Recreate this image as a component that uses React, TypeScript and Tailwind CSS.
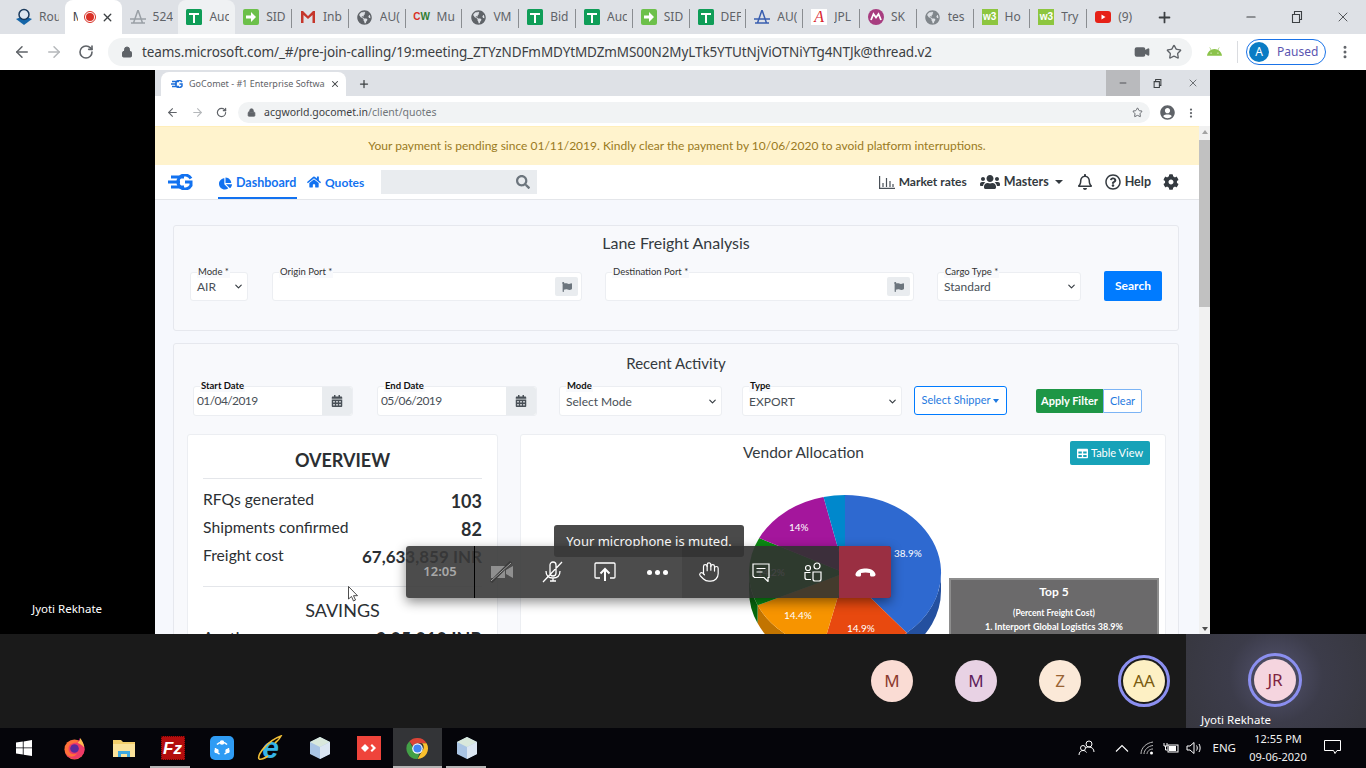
import { ArrowLeft, ArrowRight, ChevronDown, Hand, Lock, Minus, MoreVertical, Plus, RotateCw, Star, Video, X } from 'lucide-react';
import { FaAndroid, FaCalendarAlt, FaChartPie, FaCog, FaFlag, FaGlobeAmericas, FaHome, FaRegBell, FaRegQuestionCircle, FaSearch, FaTable, FaUserCircle, FaUsers } from 'react-icons/fa';

const sans = 'font-["Noto_Sans",sans-serif]';

// Browser tab favicons
function GreenCross() {
  return (
    <svg width="16" height="16" viewBox="0 0 16 16">
      <rect width="16" height="16" rx="1.5" fill="#0f9d58" />
      <path d="M3 5h10M8 5v9" stroke="#fff" strokeWidth="2" />
    </svg>
  );
}

function GreenArrow() {
  return (
    <svg width="16" height="16" viewBox="0 0 16 16">
      <rect width="16" height="16" rx="2" fill="#6cc04a" />
      <path d="M3 6.500h5V3l5 5-5 5V9.500H3z" fill="#fff" />
    </svg>
  );
}

function Gmail() {
  return (
    <svg width="16" height="14" viewBox="0 0 16 14">
      <path d="M1 13V1h2l5 5 5-5h2v12h-2.500V5L8 9 3.500 5v8z" fill="#c5362b" />
    </svg>
  );
}

function Globe() {
  return <FaGlobeAmericas className="text-[#5f6368]" size={15} />;
}

function Pylon({ color }: { color: string }) {
  return (
    <svg width="16" height="15" viewBox="0 0 16 15">
      <path d="M8 0L3.500 13M8 0l4.500 13M0 9h16M1 13h14" stroke={color} strokeWidth="1.500" fill="none" />
    </svg>
  );
}

function W3() {
  return <span className="flex h-[16px] w-[16px] items-center justify-center bg-[#8dc63f] font-['Liberation_Sans'] text-[10px] font-bold leading-none text-white">w3</span>;
}

const tabs: { icon: React.ReactNode; label: string; active?: boolean; hover?: boolean }[] = [
  {
    icon: (
      <svg width="18" height="18" viewBox="0 0 18 18">
        <path d="M1 11l8-3 8 3-8 6z" fill="#1565a8" />
        <circle cx="9" cy="6.500" r="5" fill="#dfe7f0" stroke="#1b3a5c" strokeWidth="1.500" />
      </svg>
    ),
    label: 'Rou',
  },
  { icon: null, label: 'M', active: true },
  { icon: <Pylon color="#9aa0a6" />, label: '524' },
  { icon: <GreenCross />, label: 'Auc', hover: true },
  { icon: <GreenArrow />, label: 'SID' },
  { icon: <Gmail />, label: 'Inb' },
  { icon: <Globe />, label: 'AU(' },
  { icon: <span className="font-['Liberation_Sans'] text-[10px] font-bold leading-none"><span className="text-[#d93025]">C</span><span className="text-[#2e7d32]">W</span></span>, label: 'Mu' },
  { icon: <Globe />, label: 'VM' },
  { icon: <GreenCross />, label: 'Bid' },
  { icon: <GreenCross />, label: 'Auc' },
  { icon: <GreenArrow />, label: 'SID' },
  { icon: <GreenCross />, label: 'DEF' },
  { icon: <Pylon color="#3a5fb0" />, label: 'AU(' },
  {
    icon: (
      <span className="flex h-[16px] w-[16px] items-center justify-center bg-white font-['Liberation_Serif'] text-[16px] italic leading-none text-[#d9232e]">A</span>
    ),
    label: 'JPL',
  },
  {
    icon: (
      <svg width="16" height="16" viewBox="0 0 16 16">
        <circle cx="8" cy="8" r="8" fill="#a83d80" />
        <path d="M3 11l2.500-6L8 8.500 10.500 5 13 11" stroke="#fff" strokeWidth="1.800" fill="none" />
      </svg>
    ),
    label: 'SK',
  },
  { icon: <FaGlobeAmericas className="text-[#80868b]" size={15} />, label: 'tes' },
  { icon: <W3 />, label: 'Ho' },
  { icon: <W3 />, label: 'Try' },
  {
    icon: (
      <svg width="16" height="12" viewBox="0 0 16 12">
        <rect width="16" height="12" rx="3" fill="#e62117" />
        <path d="M6.500 3.500v5l4-2.500z" fill="#fff" />
      </svg>
    ),
    label: '(9)',
  },
];

function OuterChrome() {
  return (
    <div className="shrink-0">
      <div className="flex h-[34px] items-end bg-[#dee1e6] pl-[8px]">
        {tabs.map((t, i) => (
          <div
            key={i}
            className={`relative flex h-[34px] w-[56.8px] shrink-0 items-center overflow-hidden rounded-t-lg ${t.active ? 'bg-white' : t.hover ? 'bg-[#eff1f3]' : ''}`}
          >
            {t.active ? (
              <div className="flex items-center pl-[8px]">
                <span className={`${sans} w-[5px] overflow-hidden text-[12px] text-[#3c4043]`}>M</span>
                <span className="ml-[6px] flex h-[12px] w-[12px] items-center justify-center rounded-full border border-[#d93025]">
                  <span className="h-[8px] w-[8px] rounded-full bg-[#d93025]" />
                </span>
                <X size={13} strokeWidth={2.5} className="ml-[5px] text-[#3c4043]" />
              </div>
            ) : (
              <>
                <span className="flex w-[31px] shrink-0 justify-center pl-[1px]">{t.icon}</span>
                <span className={`${sans} w-[20px] overflow-hidden whitespace-nowrap text-[12px] text-[#5f6368]`}>{t.label}</span>
                {!t.hover && tabs[i + 1] && !tabs[i + 1].active && !tabs[i + 1].hover && (
                  <span className="absolute right-0 top-[9px] h-[19px] w-px bg-[#8a8d91]" />
                )}
              </>
            )}
          </div>
        ))}
        <span className="flex h-[34px] w-[42px] items-center justify-center">
          <Plus size={17} strokeWidth={2.5} className="text-[#3c4043]" />
        </span>
        <div className="ml-auto flex h-[34px] items-center text-[#3c4043]">
          <span className="flex w-[46px] justify-center"><Minus size={14} /></span>
          <span className="flex w-[46px] justify-center">
            <svg width="12" height="12" viewBox="0 0 12 12" fill="none" stroke="currentColor" strokeWidth="1.100"><path d="M1.500 3.500h7v8h-7zM3.500 3.500V.5h7v8H8.500" /></svg>
          </span>
          <span className="flex w-[46px] justify-center"><X size={16} strokeWidth={1.3} /></span>
        </div>
      </div>
      <div className="flex h-[36px] items-center bg-white">
        <ArrowLeft size={18} className="ml-[13px] text-[#5f6368]" />
        <ArrowRight size={18} className="ml-[14px] text-[#b5b8bb]" />
        <RotateCw size={16} strokeWidth={2.4} className="ml-[15px] text-[#5f6368]" />
        <div className="ml-[14px] flex h-[28px] w-[1084px] items-center rounded-full bg-[#f1f3f4] pl-[13px]">
          <Lock size={12} className="fill-[#5f6368] text-[#5f6368]" />
          <span className={`${sans} ml-[9px] whitespace-nowrap text-[13.5px] tracking-[-0.1px] text-[#3c4043]`}>
            teams.microsoft.com/_#/pre-join-calling/19:meeting_ZTYzNDFmMDYtMDZmMS00N2MyLTk5YTUtNjViOTNiYTg4NTJk@thread.v2
          </span>
          <Video size={16} className="ml-auto fill-[#5f6368] text-[#5f6368]" />
          <Star size={16} strokeWidth={2} className="ml-[16px] mr-[10px] text-[#5f6368]" />
        </div>
        <FaAndroid size={15} className="ml-[15px] text-[#8bc34a]" />
        <span className="ml-[15px] h-[22px] w-px bg-[#dadce0]" />
        <div className="ml-[8px] flex h-[26px] w-[80px] items-center rounded-full border border-[#1a73e8] pl-[2px]">
          <span className="flex h-[20px] w-[20px] items-center justify-center rounded-full bg-[#0b7cc4] text-[12px] text-white">A</span>
          <span className={`${sans} ml-[8px] text-[12px] text-[#5a55b0]`}>Paused</span>
        </div>
        <MoreVertical size={16} strokeWidth={2.5} className="ml-[11px] text-[#5f6368]" />
      </div>
    </div>
  );
}

function InnerChrome() {
  return (
    <>
      <div className="flex h-[26px] items-end bg-[#dee1e6] pl-[6px]">
        <div className="flex h-[24px] w-[185px] items-center rounded-t-lg bg-white pl-[10px]">
          <svg width="12" height="8" viewBox="0 0 24 16"><path d="M2 3h14M0 8h12M2 13h14" stroke="#1e6fd9" strokeWidth="3" /><path d="M22 4a7 7 0 1 0 0 8V8h-5" stroke="#1e6fd9" strokeWidth="3" fill="none" /></svg>
          <span className={`${sans} ml-[6px] w-[136px] overflow-hidden whitespace-nowrap text-[9px] text-[#5f6368]`}>GoComet - #1 Enterprise Software</span>
          <X size={10} strokeWidth={2.5} className="ml-[5px] text-[#3c4043]" />
        </div>
        <span className="ml-[12px] flex h-[24px] items-center"><Plus size={12} strokeWidth={2.5} className="text-[#3c4043]" /></span>
        <div className="ml-auto flex h-[26px] items-center text-[#3c4043]">
          <span className="flex h-[26px] w-[34px] items-center justify-center bg-[#b9babd]"><Minus size={10} /></span>
          <span className="flex w-[35px] justify-center">
            <svg width="9" height="9" viewBox="0 0 12 12" fill="none" stroke="currentColor" strokeWidth="1.400"><path d="M1.500 3.500h7v8h-7zM3.500 3.500V.5h7v8H8.500" /></svg>
          </span>
          <span className="flex w-[35px] justify-center"><X size={12} strokeWidth={1.4} /></span>
        </div>
      </div>
      <div className="flex h-[30px] items-center bg-white pt-[3px]">
        <ArrowLeft size={13} className="ml-[11px] text-[#5f6368]" />
        <ArrowRight size={13} className="ml-[12px] text-[#b5b8bb]" />
        <RotateCw size={11} strokeWidth={2.6} className="ml-[12px] text-[#5f6368]" />
        <div className="ml-[11px] flex h-[21px] w-[912px] items-center rounded-full bg-[#f1f3f4] pl-[9px]">
          <Lock size={9} className="fill-[#5f6368] text-[#5f6368]" />
          <span className={`${sans} ml-[8px] text-[10.5px] text-[#3c4043]`}>
            acgworld.gocomet.in<span className="text-[#70757a]">/client/quotes</span>
          </span>
          <Star size={11} strokeWidth={2} className="ml-auto mr-[7px] text-[#5f6368]" />
        </div>
        <FaUserCircle size={15} className="ml-[10px] text-[#5f6368]" />
        <MoreVertical size={12} strokeWidth={2.5} className="ml-[10px] text-[#5f6368]" />
      </div>
    </>
  );
}

function Navbar() {
  return (
    <div className="flex h-[35px] shrink-0 items-center border-b border-[#e4e6ea] bg-white font-['Lato',sans-serif]">
      <svg width="25" height="16" viewBox="0 0 25 16" className="ml-[13px]">
        <path d="M3 3h13M0 8h12M3 13h13" stroke="#1272f0" strokeWidth="3" />
        <path d="M23 4.500a7 7 0 1 0 0 7V8h-6" stroke="#1272f0" strokeWidth="3" fill="none" />
      </svg>
      <div className="relative ml-[25px] flex h-[34px] w-[79px] items-center border-b-2 border-[#1272f0] pl-[1px] pt-[4px] text-[#1272f0]">
        <FaChartPie size={13} />
        <span className="ml-[4px] text-[12.5px] font-bold">Dashboard</span>
      </div>
      <FaHome size={14} className="ml-[10px] text-[#1272f0]" />
      <span className="ml-[4px] mt-[1px] text-[12px] font-bold text-[#1272f0]">Quotes</span>
      <div className="ml-[17px] flex h-[24px] w-[156px] items-center justify-end bg-[#e9ecef] pr-[7px]">
        <FaSearch size={14} className="text-[#6c757d]" />
      </div>
      <div className="ml-auto flex items-center pr-[20px] text-[#343a40]">
        <svg width="16" height="13" viewBox="0 0 16 13" fill="none" stroke="#495057" strokeWidth="1.200"><path d="M.6 0v12.400H16M4 11V7M7.500 11V2M11 11V5M14 11V8" /></svg>
        <span className="ml-[4px] text-[12px] font-bold">Market rates</span>
        <FaUsers size={20} className="ml-[13px]" />
        <span className="ml-[4px] text-[12.5px] font-bold">Masters</span>
        <span className="ml-[6px] h-0 w-0 border-x-[4px] border-t-[4px] border-x-transparent border-t-[#343a40]" />
        <FaRegBell size={16} className="ml-[14px]" />
        <FaRegQuestionCircle size={16} className="ml-[12px]" />
        <span className="ml-[4px] text-[12.5px] font-bold">Help</span>
        <FaCog size={16} className="ml-[12px]" />
      </div>
    </div>
  );
}

function FloatLabel({ text, bold }: { text: string; bold?: boolean }) {
  return (
    <span className={`absolute left-[6px] top-[-7px] bg-[#f8f9fc] px-[1px] text-[9.5px] leading-[12px] ${bold ? 'font-bold text-[#111]' : 'text-[#333]'}`}>
      {text}
    </span>
  );
}

function SelectBox({ label, value, className, bold }: { label: string; value: string; className: string; bold?: boolean }) {
  return (
    <div className={`relative flex items-center justify-between rounded-[3px] border border-[#eceef2] bg-white pl-[6px] pr-[3px] text-[12px] text-[#495057] ${className}`}>
      <FloatLabel text={label} bold={bold} />
      <span className="mt-[1px]">{value}</span>
      <ChevronDown size={11} strokeWidth={2.5} className="text-[#343a40]" />
    </div>
  );
}

function PortInput({ label, className }: { label: string; className: string }) {
  return (
    <div className={`relative flex h-[29px] items-center justify-end rounded-[3px] border border-[#eceef2] bg-white pr-[3px] ${className}`}>
      <FloatLabel text={label} />
      <span className="flex h-[19px] w-[23px] items-center justify-center rounded-[2px] bg-[#e9ecef]">
        <FaFlag size={10} className="text-[#6c757d]" />
      </span>
    </div>
  );
}

function DateInput({ label, value, className }: { label: string; value: string; className: string }) {
  return (
    <div className={`relative flex h-[30px] w-[160px] items-stretch rounded-[3px] border border-[#eceef2] bg-white ${className}`}>
      <FloatLabel text={label} bold />
      <span className="flex flex-1 items-center pl-[3px] text-[12px] tracking-[-0.6px] text-[#495057]">{value}</span>
      <span className="flex w-[30px] items-center justify-center rounded-r-[3px] bg-[#e9ecef]">
        <FaCalendarAlt size={12} className="text-[#495057]" />
      </span>
    </div>
  );
}

const pieData = [
  { pct: 38.9, color: '#2e69d0' },
  { pct: 14.9, color: '#e8490f' },
  { pct: 14.4, color: '#f79400' },
  { pct: 14.2, color: '#0a8a12' },
  { pct: 14, color: '#a4169c' },
  { pct: 3.6, color: '#0088cc' },
];

// Side wall of the 3d pie, only the part that faces the viewer
const pieWalls = [
  { from: 90, to: 140, color: '#24509f' },
  { from: 140, to: 193.7, color: '#b5390b' },
  { from: 193.7, to: 245.5, color: '#c27400' },
  { from: 245.5, to: 270, color: '#076a0d' },
];

function Pie() {
  const cx = 98;
  const cy = 78;
  const rx = 96;
  const ry = 78;
  const depth = 18;
  let a = 0;
  const pt = (deg: number, dy = 0) => {
    const r = (deg * Math.PI) / 180;
    return `${(cx + rx * Math.sin(r)).toFixed(1)} ${(cy + dy - ry * Math.cos(r)).toFixed(1)}`;
  };
  return (
    <svg width="196" height="176" viewBox="0 0 196 176" className="block">
      {pieWalls.map((w) => (
        <path
          key={w.color}
          d={`M${pt(w.from)} A${rx} ${ry} 0 0 1 ${pt(w.to)} L${pt(w.to, depth)} A${rx} ${ry} 0 0 0 ${pt(w.from, depth)} Z`}
          fill={w.color}
        />
      ))}
      {pieData.map((s) => {
        const start = a;
        a += s.pct * 3.6;
        return <path key={s.color} d={`M${cx} ${cy} L${pt(start)} A${rx} ${ry} 0 ${s.pct > 50 ? 1 : 0} 1 ${pt(a)} Z`} fill={s.color} />;
      })}
    </svg>
  );
}

function Overview() {
  return (
    <div className="w-[311px] shrink-0 rounded-[3px] border border-[#eceef2] bg-white px-[15px] pt-[14px] text-[#2b2f33]">
      <div className="border-b border-[#e4e6ea] pb-[6px] text-center text-[18px] font-bold leading-[23px]">OVERVIEW</div>
      <div className="mt-[10px] flex h-[28px] items-start justify-between text-[15.7px] leading-[20px]">
        <span>RFQs generated</span><span className="mt-[2px] text-[18px] font-bold">103</span>
      </div>
      <div className="flex h-[28px] items-start justify-between text-[15.7px] leading-[20px]">
        <span>Shipments confirmed</span><span className="mt-[2px] text-[18px] font-bold">82</span>
      </div>
      <div className="flex h-[40px] items-start justify-between text-[15.7px] leading-[20px]">
        <span>Freight cost</span><span className="mt-[2px] text-[17px] font-bold">67,633,859 INR</span>
      </div>
      <div className="mt-[1px] border-t border-[#e4e6ea] pt-[11px] text-center text-[18px] leading-[24px]">SAVINGS</div>
      <div className="mt-[5px] flex items-start justify-between text-[15.7px] leading-[20px]">
        <span>Auction</span><span className="mt-[2px] text-[18px] font-bold">9,05,010 INR</span>
      </div>
    </div>
  );
}

function Vendor() {
  return (
    <div className="ml-[22px] h-[220px] w-[646px] shrink-0 rounded-[3px] border border-[#eceef2] bg-white">
      <div className="flex h-[36px] items-start">
        <span className="ml-[222px] mt-[7px] text-[15.5px] leading-[20px] text-[#343a40]">Vendor Allocation</span>
        <span className="ml-auto mr-[15px] mt-[6px] flex h-[24px] w-[80px] items-center justify-center rounded-[2px] bg-[#17a2b8] text-[11px] text-white">
          <FaTable size={11} className="mr-[3px]" />Table View
        </span>
      </div>
      <div className="flex items-start">
        <div className="relative ml-[226px] mt-[24px] h-[176px] w-[196px]">
          <Pie />
          <span className="absolute left-[42px] top-[25px] text-[10px] text-white">14%</span>
          <span className="absolute left-[147px] top-[51px] text-[10px] text-white">38.9%</span>
          <span className="absolute left-[37px] top-[113px] text-[10px] text-white">14.4%</span>
          <span className="absolute left-[100px] top-[126px] text-[10px] text-white">14.9%</span>
          <span className="absolute left-[10px] top-[70px] text-[10px] text-white">14.2%</span>
        </div>
        <div className="ml-[6px] mt-[107px] h-[70px] w-[210px] shrink-0 border-2 border-b-0 border-[#8d8d8d] bg-[#6b6a6b] pt-[4px] text-center text-white">
          <div className="text-[12px] font-bold leading-[16px]">Top 5</div>
          <div className="mt-[6px] text-[8.5px] font-bold leading-[14px]">(Percent Freight Cost)</div>
          <div className="text-[9px] font-bold leading-[14px]">1. Interport Global Logistics 38.9%</div>
        </div>
      </div>
    </div>
  );
}

function Page() {
  return (
    <div className="flex min-h-0 flex-1 overflow-hidden">
      <div className="flex w-[1044px] shrink-0 flex-col overflow-hidden bg-[#f6f8fd] font-['Lato',sans-serif]">
        <div className="flex h-[39px] shrink-0 items-center justify-center border-t border-[#ffeeba] bg-[#fff3cd] text-[12px] text-[#9a7a22]">
          Your payment is pending since 01/11/2019. Kindly clear the payment by 10/06/2020 to avoid platform interruptions.
        </div>
        <Navbar />
        <div className="px-[18px] pt-[25px]">
          <div className="h-[106px] w-[1006px] rounded-[3px] border border-[#e6e8ee] bg-[#f8f9fc]">
            <div className="mt-[7px] text-center text-[16px] leading-[20px] text-[#343a40]">Lane Freight Analysis</div>
            <div className="mt-[19px] flex items-start pl-[16px]">
              <SelectBox label="Mode *" value="AIR" className="h-[29px] w-[58px]" />
              <PortInput label="Origin Port *" className="ml-[24px] w-[310px]" />
              <PortInput label="Destination Port *" className="ml-[23px] w-[309px]" />
              <SelectBox label="Cargo Type *" value="Standard" className="ml-[23px] h-[29px] w-[144px]" />
              <span className="ml-[23px] mt-[-1px] flex h-[30px] w-[58px] items-center justify-center rounded-[2px] bg-[#007bff] text-[12px] font-bold text-white">Search</span>
            </div>
          </div>
          <div className="mt-[12px] w-[1006px] rounded-t-[3px] border border-[#e6e8ee] bg-[#f8f9fc]">
            <div className="mt-[9px] text-center text-[15px] leading-[20px] text-[#343a40]">Recent Activity</div>
            <div className="mt-[13px] flex items-start pl-[19px]">
              <DateInput label="Start Date" value="01/04/2019" className="" />
              <DateInput label="End Date" value="05/06/2019" className="ml-[24px]" />
              <SelectBox label="Mode" value="Select Mode" bold className="ml-[22px] h-[30px] w-[163px]" />
              <SelectBox label="Type" value="EXPORT" bold className="ml-[20px] h-[30px] w-[160px]" />
              <span className="ml-[12px] flex h-[29px] w-[93px] items-center justify-center rounded-[3px] border border-[#007bff] bg-white text-[11px] text-[#1f7ae0]">
                Select Shipper
                <span className="ml-[3px] h-0 w-0 border-x-[3.5px] border-t-[4px] border-x-transparent border-t-[#1f7ae0]" />
              </span>
              <span className="ml-[29px] mt-[3px] flex h-[24px] w-[67px] items-center justify-center rounded-l-[2px] bg-[#1e9646] text-[11px] font-bold text-white">Apply Filter</span>
              <span className="mt-[3px] flex h-[24px] w-[39px] items-center justify-center rounded-r-[2px] border border-[#7cb4f5] bg-white text-[11px] text-[#1f7ae0]">Clear</span>
            </div>
            <div className="mt-[18px] flex items-start pl-[13px]">
              <Overview />
              <Vendor />
            </div>
          </div>
        </div>
      </div>
      <div className="flex w-[11px] shrink-0 flex-col items-center bg-[#f1f1f1]">
        <span className="mt-[4px] h-0 w-0 border-x-[3px] border-b-[4px] border-x-transparent border-b-[#a3a3a3]" />
        <span className="mt-[6px] h-[167px] w-full bg-[#c1c1c1]" />
        <span className="mt-auto mb-[3px] h-0 w-0 border-x-[3.5px] border-t-[4px] border-x-transparent border-t-[#505050]" />
      </div>
    </div>
  );
}

function CallToolbar() {
  const icon = 'flex h-[52px] items-center justify-center text-white';
  return (
    <div className="absolute left-[406px] top-[525px] w-[485px] font-['Noto_Sans',sans-serif]">
      <div className="ml-[148px] flex h-[32px] w-[190px] justify-center overflow-hidden rounded-[3px] bg-[#4a4a4a] pt-[6px] text-[13px] leading-[20px] text-white">
        Your microphone is muted.
      </div>
      <div className="absolute left-0 top-[21px] flex h-[52px] w-[485px] overflow-hidden rounded-[3px] bg-[#383838]/90 shadow-[0_4px_12px_rgba(0,0,0,0.45)]">
        <div className="flex w-[69px] items-center justify-center border-r border-black text-[13px] font-semibold text-[#a8a8a8]">12:05</div>
        <span className={`${icon} w-[53px]`}>
          <svg width="24" height="22" viewBox="0 0 24 22"><path d="M1 5h14v12H1zM16 9l7-4v12l-7-4z" fill="#8f8f8f" /><path d="M1 21L21 1" stroke="#3a3a3a" strokeWidth="3" /><path d="M1 20L21 2" stroke="#a0a0a0" strokeWidth="1" /></svg>
        </span>
        <span className={`${icon} w-[50px]`}>
          <svg width="22" height="22" viewBox="0 0 22 22" fill="none" stroke="#fff" strokeWidth="1.300"><path d="M8 12V4a3 3 0 0 1 6 0v8a3 3 0 0 1-6 0zM4 10c0 5 3 7 7 7s7-2 7-7M8 20h6M11 17v3M1 21L20 1" /></svg>
        </span>
        <span className={`${icon} w-[54px]`}>
          <svg width="22" height="20" viewBox="0 0 22 20" fill="none" stroke="#fff" strokeWidth="1.300"><path d="M6 16H2a1 1 0 0 1-1-1V2a1 1 0 0 1 1-1h18a1 1 0 0 1 1 1v13a1 1 0 0 1-1 1h-4" /><path d="M11 19V7M6.500 11.500L11 7l4.500 4.500" strokeWidth="2" /></svg>
        </span>
        <span className={`${icon} w-[50px] gap-[3px]`}>
          <span className="h-[5px] w-[5px] rounded-full bg-white" /><span className="h-[5px] w-[5px] rounded-full bg-white" /><span className="h-[5px] w-[5px] rounded-full bg-white" />
        </span>
        <span className={`${icon} w-[53px] bg-black/10`}><Hand size={22} strokeWidth={1.3} /></span>
        <span className={`${icon} w-[52px] bg-black/10`}>
          <svg width="18" height="19" viewBox="0 0 18 19" fill="none" stroke="#fff" strokeWidth="1.200"><path d="M1 1h16v13.500h-1v4l-4-4H2.500L1 13zM4.500 5.500h9M4.500 9h6" /></svg>
        </span>
        <span className={`${icon} w-[52px] bg-black/10`}>
          <svg width="20" height="20" viewBox="0 0 20 20" fill="none" stroke="#fff" strokeWidth="1.200"><circle cx="14" cy="4" r="3" /><circle cx="5" cy="6" r="2.500" /><path d="M10 10h8v7a2 2 0 0 1-2 2h-4a2 2 0 0 1-2-2zM7.500 10.500H2v5a2 2 0 0 0 2 2h4" /></svg>
        </span>
        <span className={`${icon} flex-1 bg-[#9a2f42]`}>
          <svg width="21" height="9" viewBox="0 0 21 9"><path d="M.5 6C2 1.500 7 .5 10.500.5S19 1.500 20.500 6c.3 1.500-.7 2.500-2 2.500h-2c-1 0-1.500-.7-1.500-1.500V5c-2.500-.8-6.500-.8-9 0v2c0 .8-.5 1.500-1.500 1.500h-2c-1.300 0-2.300-1-2-2.500z" fill="#fff" /></svg>
        </span>
      </div>
    </div>
  );
}

function Avatar({ text, bg, color, ring }: { text: string; bg: string; color: string; ring?: boolean }) {
  return (
    <span
      className={`flex h-[42px] w-[42px] shrink-0 items-center justify-center rounded-full text-[17px] ${bg} ${color} ${ring ? 'outline-[3px] outline-offset-[2px] outline-[#8b8ff0]' : ''}`}
    >
      {text}
    </span>
  );
}

function ParticipantStrip() {
  return (
    <div className="flex h-[94px] shrink-0 items-start justify-end bg-[#1a1a1a] font-['Noto_Sans',sans-serif]">
      <div className="mr-[21px] mt-[26px] flex gap-[42px]">
        <Avatar text="M" bg="bg-[#fadcd4]" color="text-[#8c3a2e]" />
        <Avatar text="M" bg="bg-[#e8d2e4]" color="text-[#5f1f5c]" />
        <Avatar text="Z" bg="bg-[#fbe9d8]" color="text-[#9a6434]" />
        <Avatar text="AA" bg="bg-[#fdf0c4]" color="text-[#7a5c10]" ring />
      </div>
      <div className="relative h-[94px] w-[180px] bg-[radial-gradient(circle_at_50%_45%,#545470_0%,#3c3c4a_45%,#37373f_100%)]">
        <span className="absolute left-[68px] top-[25px] flex h-[42px] w-[42px] items-center justify-center rounded-full bg-[#f5d5df] text-[17px] text-[#80243f] outline-[3px] outline-offset-[3px] outline-[#8b8ff0]">JR</span>
        <span className="absolute left-[15px] top-[78px] whitespace-nowrap text-[11.5px] leading-[16px] text-white">Jyoti Rekhate</span>
      </div>
    </div>
  );
}

function Cube() {
  return (
    <svg width="22" height="24" viewBox="0 0 22 24">
      <path d="M11 1l10 5v12l-10 5-10-5V6z" fill="#a9c4e4" />
      <path d="M11 1l10 5-10 5L1 6z" fill="#d9e8dc" />
      <path d="M11 11l10-5v12l-10 5z" fill="#dbe6f2" />
    </svg>
  );
}

const TASK_CELL = 'relative flex h-[40px] w-[49px] shrink-0 items-center justify-center';

function Taskbar() {
  return (
    <div className="flex h-[40px] shrink-0 items-center bg-[#05050a] text-white">
      <span className="flex w-[48px] items-center justify-center">
        <svg width="16" height="16" viewBox="0 0 16 16" fill="#fff"><path d="M0 2.500L6.800 1.500v6H0zM7.600 1.400L16 0v7.500H7.600zM0 8.300h6.800v6.200L0 13.500zM7.600 8.300H16V16l-8.400-1.300z" /></svg>
      </span>
      <span className="w-[2px]" />
      <span className={TASK_CELL}>
        <svg width="23" height="23" viewBox="0 0 24 24">
          <circle cx="12" cy="13" r="10.500" fill="#ff7139" />
          <path d="M12 23A10.500 10.500 0 0 0 22 9c-1-3-3-6-5-8 0 3-2 4-3 5C8 6 5 9 6 14c1 4 6 5 9 3-4 6-11 4-13-1 1 4 5 7 10 7z" fill="#e31587" opacity="0.600" />
          <path d="M18 1c2 3 4 6 4 10-2-3-5-4-7-5 1-1 3-2 3-5z" fill="#ffbd4f" />
          <circle cx="12" cy="12" r="4.500" fill="#5b2a9c" />
        </svg>
      </span>
      <span className={TASK_CELL}>
        <svg width="22" height="19" viewBox="0 0 22 19">
          <path d="M0 1h8l2 2h12v15H0z" fill="#f3cf6b" />
          <path d="M0 5h22v13H0z" fill="#fbe39a" />
          <path d="M5 18v-6h12v6h-3v-3H8v3z" fill="#3fa9df" />
        </svg>
      </span>
      <span className={TASK_CELL}>
        <span className="flex h-[24px] w-[24px] items-center justify-center border border-dotted border-[#5d0000] bg-[#b30d0d] font-['Liberation_Sans'] text-[17px] font-bold italic leading-none text-white">Fz</span>
        <span className="absolute bottom-0 left-[2px] h-[2px] w-[40px] bg-[#b5b5b5]" />
      </span>
      <span className={TASK_CELL}>
        <span className="flex h-[24px] w-[24px] items-center justify-center rounded-[5px] bg-[#2f9cf4]">
          <svg width="18" height="18" viewBox="0 0 18 18" fill="none" stroke="#fff" strokeWidth="1.500"><path d="M4 5.500a6.500 6.500 0 0 1 10 0M15.500 9a6.500 6.500 0 0 1-4 6M6.500 15a6.500 6.500 0 0 1-4-6" /><circle cx="9" cy="3.500" r="1.500" fill="#fff" /><circle cx="3.500" cy="12" r="1.500" fill="#fff" /><circle cx="14.500" cy="12" r="1.500" fill="#fff" /></svg>
        </span>
      </span>
      <span className={TASK_CELL}>
        <span className="relative font-['Liberation_Sans'] text-[30px] font-bold italic leading-none text-[#35b5e8]">
          e
          <svg width="26" height="26" viewBox="0 0 26 26" className="absolute left-[-5px] top-[2px]" fill="none" stroke="#f2c037" strokeWidth="1.600"><path d="M2 24C0 20 10 6 24 1 22 5 20 6 18 8M2 24c3 1 6-1 9-3" /></svg>
        </span>
      </span>
      <span className={TASK_CELL}><Cube /></span>
      <span className={TASK_CELL}>
        <span className="flex h-[24px] w-[24px] items-center justify-center bg-[#ef443b]">
          <svg width="16" height="10" viewBox="0 0 16 10" fill="#fff"><path d="M4 1l4 4-4 4-4-4zM11 1l4 4-4 4-1.500-1.500L12 5 9.500 2.500z" /></svg>
        </span>
      </span>
      <span className={`${TASK_CELL} bg-[#333437]`}>
        <svg width="23" height="23" viewBox="0 0 24 24">
          <path d="M12 1a11 11 0 0 1 9.500 5.500H12a5.500 5.500 0 0 0-5 3L3.500 4.500A11 11 0 0 1 12 1z" fill="#db4437" />
          <path d="M21.500 6.500A11 11 0 0 1 12 23l4.800-8.500a5.500 5.500 0 0 0 0-8z" fill="#fbc02d" />
          <path d="M12 23A11 11 0 0 1 3.500 4.500L8 12.500a5.500 5.500 0 0 0 6 4.700z" fill="#43a047" />
          <circle cx="12" cy="12" r="5.500" fill="#fff" />
          <circle cx="12" cy="12" r="4.300" fill="#4285f4" />
        </svg>
        <span className="absolute bottom-0 left-0 h-[2px] w-full bg-[#b5b5b5]" />
      </span>
      <span className={TASK_CELL}>
        <Cube />
        <span className="absolute bottom-0 left-[4px] h-[2px] w-[40px] bg-[#b5b5b5]" />
      </span>
      <div className={`${sans} ml-auto flex items-center text-[#f2f2f2]`}>
        <svg width="18" height="17" viewBox="0 0 18 17" fill="none" stroke="#fff" strokeWidth="1"><circle cx="11" cy="4" r="3" /><circle cx="5" cy="8" r="2.500" /><path d="M1 15c0-3 2-4.500 4-4.500s3 1 3.500 2M8 8c1-1 2-1 3-1 3 0 5 2 5 5" /></svg>
        <svg width="14" height="8" viewBox="0 0 14 8" fill="none" stroke="#fff" strokeWidth="1.100" className="ml-[19px]"><path d="M1 7.500L7 1.500l6 6" /></svg>
        <svg width="14" height="14" viewBox="0 0 14 14" fill="none" stroke="#bbb" strokeWidth="1" className="ml-[11px]"><path d="M1 13C1 7 6 2 13 1M4 13c0-4 4-8 9-8.500M7 13c0-2 2-5 6-5" /><circle cx="11.500" cy="12" r="1.500" fill="#fff" stroke="none" /></svg>
        <svg width="16" height="12" viewBox="0 0 16 12" className="ml-[9px]"><path d="M1 1v3h3V1M2.500 4v4h2" stroke="#fff" fill="none" /><rect x="5" y="3" width="10" height="7" fill="none" stroke="#fff" /><rect x="6" y="4" width="7" height="5" fill="#fff" /></svg>
        <svg width="17" height="14" viewBox="0 0 17 14" fill="none" stroke="#fff" strokeWidth="1" className="ml-[7px]"><path d="M1 5h3l4-3.500v11L4 9H1zM10.500 4.500c1 1.500 1 3.500 0 5M13 3c1.500 2 1.500 6 0 8" /></svg>
        <span className="ml-[9px] text-[11.5px]">ENG</span>
        <div className="ml-[11px] flex w-[62px] flex-col items-center whitespace-nowrap text-[11px] leading-[18px]">
          <span>12:55 PM</span>
          <span>09-06-2020</span>
        </div>
        <svg width="18" height="16" viewBox="0 0 18 16" fill="none" stroke="#fff" strokeWidth="1" className="ml-[15px] mr-[24px]"><path d="M.5.5h16v10h-3.500l-2 3-1.500-3H.5z" /></svg>
      </div>
    </div>
  );
}

export default function App() {
  return (
    <div className="relative flex h-[768px] w-[1366px] flex-col overflow-hidden bg-black">
      <OuterChrome />
      <div className="flex h-[564px] shrink-0">
        <div className="flex w-[155px] shrink-0 items-end pb-[17px] pl-[32px]">
          <span className={`${sans} text-[11.5px] leading-[16px] text-white`}>Jyoti Rekhate</span>
        </div>
        <div className="flex w-[1055px] shrink-0 flex-col">
          <InnerChrome />
          <Page />
        </div>
      </div>
      <ParticipantStrip />
      <Taskbar />
      <CallToolbar />
      {/* Mouse pointer in the shared screen */}
      <svg width="11" height="16" viewBox="0 0 11 16" className="absolute left-[348px] top-[586px]">
        <path d="M.5.5v12.500l3-2.500 2 4.500 2-1-2-4.300h4z" fill="#fff" stroke="#222" strokeWidth="0.800" />
      </svg>
    </div>
  );
}
